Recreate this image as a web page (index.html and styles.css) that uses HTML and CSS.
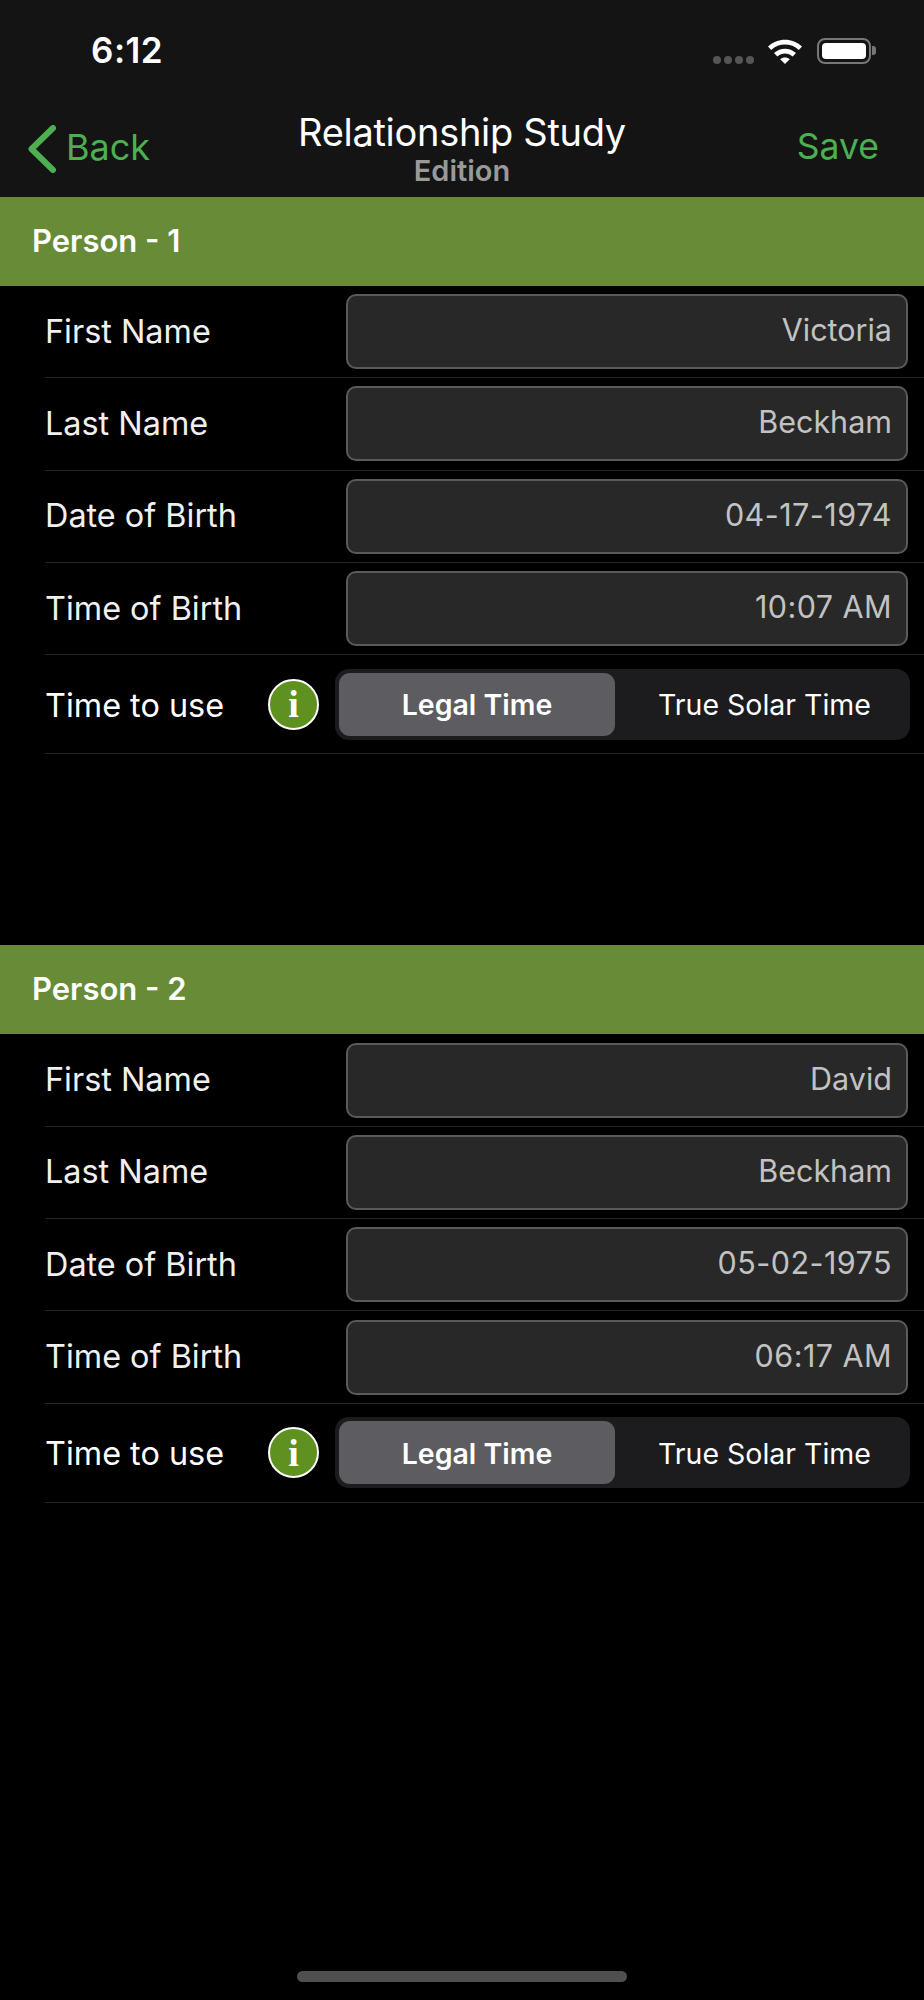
FILE: index.html
```html
<!DOCTYPE html>
<html lang="en">
<head>
    <meta charset="UTF-8">
    <meta name="viewport" content="width=device-width, initial-scale=1.0">
    <title>Relationship Study</title>
    <link rel="stylesheet" href="styles.css">
</head>
<body>
    <header class="top">
        <div class="status">
            <span class="clock">6:12</span>
            <span class="signal"><i></i><i></i><i></i><i></i></span>
            <svg class="wifi" viewBox="0 0 36 26" width="36" height="26">
                <path d="M1 8.5C10.500 -0.500 25.500 -0.500 35 8.500L31.800 12C24 4.800 12 4.800 4.200 12Z" fill="#fff"/>
                <path d="M7 15C13.500 9.200 22.500 9.200 29 15L25.700 18.500C21 14.500 15 14.500 10.300 18.500Z" fill="#fff"/>
                <path d="M13.200 21.200C16 19 20 19 22.800 21.200L18 26Z" fill="#fff"/>
            </svg>
            <span class="battery"><b></b></span>
            <span class="nub"></span>
        </div>
        <nav class="nav">
            <a class="back">
                <svg viewBox="0 0 28 48" width="28" height="48">
                    <path d="M25 3L3.500 24L25 45" fill="none" stroke="#4caf50" stroke-width="6" stroke-linecap="round" stroke-linejoin="round"/>
                </svg>
                <span>Back</span>
            </a>
            <div class="title">
                <div class="title-main">Relationship Study</div>
                <div class="title-sub">Edition</div>
            </div>
            <a class="save">Save</a>
        </nav>
    </header>

    <section class="person">
        <h2 class="band">Person - 1</h2>
        <div class="row"><label>First Name</label><div class="field">Victoria</div></div>
        <div class="row"><label>Last Name</label><div class="field">Beckham</div></div>
        <div class="row"><label>Date of Birth</label><div class="field num">04-17-1974</div></div>
        <div class="row"><label>Time of Birth</label><div class="field num">10:07 AM</div></div>
        <div class="row row-time">
            <label>Time to use</label>
            <span class="info">i</span>
            <div class="segment">
                <span class="seg seg-on">Legal Time</span>
                <span class="seg">True Solar Time</span>
            </div>
        </div>
    </section>

    <section class="person">
        <h2 class="band">Person - 2</h2>
        <div class="row"><label>First Name</label><div class="field">David</div></div>
        <div class="row"><label>Last Name</label><div class="field">Beckham</div></div>
        <div class="row"><label>Date of Birth</label><div class="field num">05-02-1975</div></div>
        <div class="row"><label>Time of Birth</label><div class="field num">06:17 AM</div></div>
        <div class="row row-time">
            <label>Time to use</label>
            <span class="info">i</span>
            <div class="segment">
                <span class="seg seg-on">Legal Time</span>
                <span class="seg">True Solar Time</span>
            </div>
        </div>
    </section>

    <div class="home-bar"></div>
</body>
</html>
```

FILE: styles.css
```css
* {
    box-sizing: border-box;
}
html, body {
    margin: 0;
    padding: 0;
    background: #000;
}
body {
    position: relative;
    width: 924px;
    height: 2000px;
    overflow: hidden;
    font-family: Inter, "Liberation Sans", sans-serif;
    color: #fff;
}

/* status bar + nav */
.top {
    height: 197px;
    background: #141414;
}
.status {
    display: flex;
    align-items: center;
    height: 100px;
    padding-left: 91px;
}
.clock {
    width: 71px;
    font-size: 35px;
    font-weight: 600;
    letter-spacing: 0.5px;
    white-space: nowrap;
}
.signal {
    display: flex;
    gap: 3px;
    margin-left: 551px;
    margin-top: 20px;
}
.signal i {
    width: 8px;
    height: 8px;
    border-radius: 50%;
    background: #555;
}
.wifi {
    margin-left: 13px;
    margin-top: 1px;
}
.battery {
    display: block;
    width: 54px;
    height: 26px;
    margin-left: 14px;
    margin-top: 1px;
    padding: 3px;
    border: 2px solid #777;
    border-radius: 8px;
}
.battery b {
    display: block;
    height: 100%;
    border-radius: 4px;
    background: #fff;
}
.nub {
    width: 4px;
    height: 9px;
    margin-left: 1px;
    margin-top: 1px;
    border-radius: 0 3px 3px 0;
    background: #777;
}
.nav {
    display: grid;
    grid-template-columns: minmax(0, 1fr) auto minmax(0, 1fr);
    align-items: center;
    height: 97px;
    padding: 0 28px;
}
.back {
    display: flex;
    align-items: center;
    gap: 10px;
    font-size: 36px;
    color: #4caf50;
}
.back span {
    margin-top: -4px;
}
.back svg {
    margin-top: 1px;
}
.title {
    margin-top: 4px;
    text-align: center;
}
.title-main {
    font-size: 38px;
    line-height: 44px;
    letter-spacing: -0.3px;
    margin-top: -4px;
}
.title-sub {
    font-size: 29px;
    line-height: 34px;
    font-weight: 600;
    color: #999;
}
.save {
    justify-self: end;
    margin-right: 17px;
    margin-top: -4px;
    font-size: 35.500px;
    color: #4caf50;
}

/* person groups */
.person {
    margin-bottom: 191.300px;
}
.band {
    display: flex;
    align-items: center;
    height: 89px;
    margin: 0;
    padding: 0 0 2px 32px;
    font-size: 31px;
    font-weight: 600;
    background: #678b36;
}
.row {
    display: flex;
    align-items: center;
    height: 92.300px;
    margin-left: 45px;
    border-bottom: 1px solid #262626;
}
.row label {
    margin-top: -1px;
    font-size: 32.400px;
    color: #f0f0f0;
}
.field {
    width: 562px;
    height: 75px;
    margin-left: auto;
    margin-right: 16px;
    padding-right: 14px;
    border: 2px solid #5a5a5a;
    border-radius: 10px;
    background: #282828;
    font-size: 30.500px;
    line-height: 68px;
    text-align: right;
    color: #c2c2c2;
}
.num {
    letter-spacing: 0.450px;
}
.row-time {
    height: 99px;
}
.row-time label {
    width: 223px;
    margin-top: 2px;
    color: #fff;
}
.info {
    display: flex;
    align-items: center;
    justify-content: center;
    flex: none;
    width: 51px;
    height: 51px;
    border: 2px solid #fff;
    border-radius: 50%;
    background: #5f9120;
    font-family: "Liberation Serif", serif;
    font-size: 38px;
    font-weight: 700;
}
.segment {
    display: flex;
    width: 575px;
    height: 71px;
    margin-left: 16px;
    padding: 4px;
    border-radius: 14px;
    background: #1c1c1e;
}
.seg {
    display: flex;
    align-items: center;
    justify-content: center;
    flex: 1;
    padding: 1px 0 0 8px;
    font-size: 28.500px;
    font-weight: 400;
}
.seg-on {
    flex: none;
    width: 276px;
    padding-left: 0;
    border-radius: 11px;
    background: #5c5c61;
    font-weight: 600;
}

/* home indicator sits over the page */
.home-bar {
    position: absolute;
    left: 297px;
    top: 1971px;
    width: 330px;
    height: 11px;
    border-radius: 6px;
    background: #4f4f4f;
}
```
